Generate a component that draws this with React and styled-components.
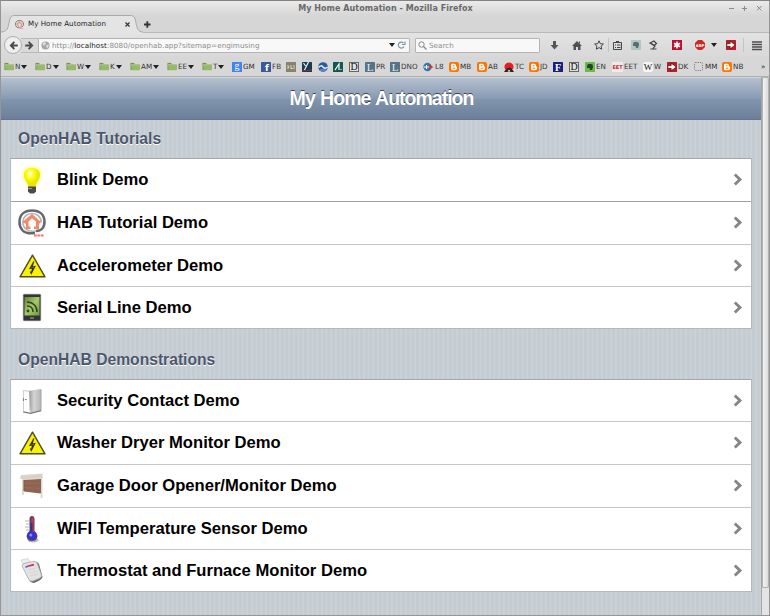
import React from 'react';
import styled, { createGlobalStyle, css } from 'styled-components';

const Global = createGlobalStyle`
  * { box-sizing: border-box; }
  body { margin: 0; background: #d6d6d6; overflow: hidden; }
  svg { display: block; flex: none; overflow: visible; }
`;

const Window = styled.div`
  width: 770px;
  height: 616px;
  display: flex;
  flex-direction: column;
  background: #d6d6d6;
  border: 1px solid #979595;
  border-top-color: #858383;
  font-family: 'DejaVu Sans', sans-serif;
  color: #3c3c3c;
`;

const Chrome = styled.div`
  height: 76px;
  flex: none;
  display: flex;
  flex-direction: column;
  background: linear-gradient(#eaeaea, #d6d6d6 15px, #d5d5d5);
  border-bottom: 1px solid #adadab;
`;

const TitleBar = styled.div`
  height: 14px;
  display: grid;
  grid-template-columns: 1fr auto 1fr;
  align-items: center;
`;

const WindowTitle = styled.div`
  grid-column: 2;
  padding: 1px 0 0 1px;
  font-size: 8px;
  line-height: 14px;
  font-weight: bold;
  color: #6a6a6a;
  letter-spacing: 0.06px;
  white-space: nowrap;
`;

const WindowButtons = styled.div`
  justify-self: end;
  margin-right: 6px;
`;

const TabStrip = styled.div`
  height: 17px;
  display: flex;
  align-items: flex-end;
`;

const Tab = styled.div`
  position: relative;
  width: 142px;
  height: 18px;
  display: flex;
  align-items: center;
  padding: 2px 0 0 14px;
`;

const TabShape = styled.svg`
  position: absolute;
  left: 0;
  top: 0;
`;

const TabLabel = styled.span`
  position: relative;
  flex: 1;
  margin-left: 4px;
  font-size: 7.1px;
  line-height: 16px;
  letter-spacing: 0.05px;
  color: #222;
  white-space: nowrap;
`;

const TabIcon = styled.span`
  position: relative;
  margin-right: ${(p) => p.$gap || 0}px;
`;

const NavBar = styled.div`
  height: 25px;
  display: flex;
  align-items: center;
  border-top: 1px solid #b9b9b9;
  background: linear-gradient(#e3e3e3, #d8d8d8);
`;

const BackButton = styled.div`
  position: relative;
  flex: none;
  width: 18px;
  height: 18px;
  margin-left: 3px;
  border-radius: 50%;
  border: 1px solid #adadad;
  background: #efefef;
  display: grid;
  place-items: center;
`;

const ForwardButton = styled.div`
  flex: none;
  width: 17px;
  height: 15px;
  margin-left: -1px;
  border: solid #b8b8b8;
  border-width: 1px 0;
  background: #dadada;
  display: grid;
  place-items: center;
`;

const Field = styled.div`
  flex: none;
  width: ${(p) => p.$width}px;
  height: 15px;
  margin-left: ${(p) => p.$left || 0}px;
  padding: 0 3px 0 2px;
  display: flex;
  align-items: center;
  gap: 2px;
  border: 1px solid #b4b4b4;
  border-radius: ${(p) => (p.$joined ? '0 1px 1px 0' : '1px')};
  background: #f8f8f8;
  font-size: 7.2px;
  line-height: 13px;
  color: #8c8c8c;
  white-space: nowrap;
`;

const Url = styled.span`
  flex: 1;
  letter-spacing: 0.04px;
  b { font-weight: normal; color: #222; }
`;

const ToolRow = styled.div`
  flex: none;
  height: 18px;
  display: flex;
  align-items: center;
`;

const Tool = styled.div`
  width: ${(p) => p.$width}px;
  margin-left: ${(p) => p.$left || 0}px;
  flex: none;
  display: flex;
  justify-content: center;
`;

const Divider = styled.div`
  width: 1px;
  height: 14px;
  background: #c3c3c3;
`;

const Bookmarks = styled.div`
  flex: 1;
  display: flex;
  align-items: center;
  padding-left: 3px;
  background: #d7d7d7;
`;

const Bookmark = styled.div`
  width: ${(p) => p.$width}px;
  flex: none;
  display: flex;
  align-items: center;
  gap: 1px;
  font-size: 7.2px;
  line-height: 10px;
  color: #333;
  white-space: nowrap;
`;

const Caret = styled.span`
  border: solid transparent;
  border-width: 4px 3px 0;
  border-top-color: #222;
`;

const Viewport = styled.div`
  flex: 1;
  min-height: 0;
  display: flex;
`;

const Page = styled.main`
  width: 760px;
  background: repeating-linear-gradient(90deg, #c4cbd1 0 2.3px, #cad2d9 2.9px 4.1px, #c4cbd1 4.667px);
  font-family: 'Liberation Sans', sans-serif;
`;

const PageHeader = styled.header`
  height: 43px;
  display: flex;
  align-items: flex-start;
  justify-content: center;
  background: linear-gradient(#b5c0cf, #889bb3 50%, #8195af 51%, #6d7f99);
  border-bottom: 1px solid #65758b;
  border-top: 1px solid #cdd5df;
  h1 {
    margin: 0;
    padding-left: 1px;
    font-size: 19.6px;
    line-height: 40px;
    letter-spacing: -1.05px;
    word-spacing: 1px;
    color: #fff;
    text-shadow: 0 -1px 0 rgba(0, 0, 0, 0.6);
    white-space: nowrap;
  }
`;

const GroupTitle = styled.h2`
  margin: 0;
  height: ${(p) => p.$height}px;
  padding: 0 0 9px 17px;
  display: flex;
  align-items: flex-end;
  font-size: 15.65px;
  line-height: 20px;
  color: #4c566c;
  text-shadow: 0 1px 0 #fff;
`;

const List = styled.ul`
  width: 742px;
  margin: 0 0 0 9px;
  padding: 0;
  display: grid;
  grid-template-rows: ${(p) => p.$rows};
  list-style: none;
  background: #fff;
  border: 1px solid #b5b9bc;
  border-top-color: #a4a8aa;
`;

const Row = styled.li`
  display: flex;
  align-items: center;
  padding: 0 9px 0 6px;
  & + & { border-top: 1px solid #c6c6c6; }
  ${(p) => p.$dark && css`&& { border-top-color: #a0a0a0; }`}
`;

const RowIcon = styled.span`
  width: 30px;
  display: flex;
  justify-content: center;
`;

const RowLabel = styled.span`
  flex: 1;
  margin-left: 10px;
  font-size: 16.62px;
  font-weight: bold;
  line-height: 20px;
  color: #000;
  white-space: nowrap;
`;

const Scrollbar = styled.div`
  flex: 1;
  display: flex;
  flex-direction: column;
  align-items: center;
  background: #cfcfcf;
  border-left: 1px solid #a5a5a5;
`;

const Thumb = styled.div`
  width: 7px;
  height: 511px;
  background: linear-gradient(90deg, #f4f4f4, #dcdcdc);
  border: 1px solid #b0b0b0;
  border-radius: 2px;
`;

const Track = styled.div`
  width: 7px;
  flex: 1;
  background: #e4e4e4;
`;

const Hab = ({ size }) => (
  <svg width={size} height={size} viewBox="0 0 28 28" fill="none">
    <path d="M17 24.300H13C6 24.300 1.500 20 1.500 13C1.500 6 6 1.500 14 1.500C22 1.500 26.500 6 26.500 13C26.500 19 22.500 22 18 22" stroke="#66696b" strokeWidth="2.600" />
    <path d="M18 22C10 23.500 4.800 19 4.800 13C4.800 8 9 4.500 14 4.500C19 4.500 23.300 8 23.300 13.500" stroke="#b3b3b3" strokeWidth="1.600" />
    <path d="M4.500 13L14 5L23 13L21 15V20H16V17.500H18V12.500L14 9.300L10.500 12.500V17.500H12.500V20H8V15Z" fill="#f4896a" />
    <path d="M16 26.500h10" stroke="#f47a5e" strokeWidth="2" strokeDasharray="2.800 .6" />
  </svg>
);

const Bulb = () => (
  <svg width="20" height="28" viewBox="0 0 20 28">
    <defs>
      <radialGradient id="bulb" cx=".4" cy=".3"><stop offset="0" stopColor="#fff" /><stop offset=".25" stopColor="#ffff78" /><stop offset=".6" stopColor="#fafa00" /><stop offset="1" stopColor="#e6e600" /></radialGradient>
      <filter id="glow" x="-30%" y="-30%" width="160%" height="160%"><feGaussianBlur stdDeviation="1" /></filter>
    </defs>
    <path d="M10 1C4 1 1 4.500 1 9C1 14 5 15 6 21H14C15 15 19 14 19 9C19 4.500 16 1 10 1Z" fill="#ffff50" filter="url(#glow)" />
    <path d="M10 2C5 2 2 5 2 9C2 14 6 16 6.500 21H13.500C14 16 18 14 18 9C18 5 15 2 10 2Z" fill="url(#bulb)" />
    <path d="M6 20.500h8v5l-2 2H8l-2-2z" fill="#4a4a50" /><path d="M6 22.500h4" stroke="#999" />
  </svg>
);

const Warning = () => (
  <svg width="27" height="24" viewBox="0 0 27 24">
    <path d="M13.500 1.200L26 22.800H1Z" fill="#f8f200" stroke="#4d4b28" strokeWidth="1.400" strokeLinejoin="round" />
    <path d="M15 7.500L11 14.300L13.700 13.800L12.300 19.500M14.500 8L13 13L15.800 12.500L12.300 19.500L11.300 17.500" fill="none" stroke="#35330f" strokeWidth="1.200" />
  </svg>
);

const Phone = () => (
  <svg width="18" height="27" viewBox="0 0 18 27">
    <defs><linearGradient id="screen" x1="0" y1="0" x2="1" y2="1"><stop stopColor="#5f7f3a" /><stop offset=".5" stopColor="#a7ca68" /><stop offset="1" stopColor="#6b9a3c" /></linearGradient></defs>
    <rect x=".3" y=".3" width="17.400" height="26.400" rx="1" fill="#32343a" stroke="#777" strokeWidth=".6" />
    <rect x="1.500" y="3" width="15" height="18.500" fill="url(#screen)" />
    <path d="M4 8c6 0 10 4 10 10M4 12c4 0 6 2 6 6" stroke="#33421f" strokeWidth="1.500" fill="none" />
    <circle cx="5" cy="17" r="1.400" fill="#33421f" /><path d="M7 24h4" stroke="#aaa" />
  </svg>
);

const Door = () => (
  <svg width="21" height="28" viewBox="0 0 22 28">
    <defs><linearGradient id="door"><stop stopColor="#9a9a9a" /><stop offset=".4" stopColor="#d4d4d4" /><stop offset="1" stopColor="#b4b4b4" /></linearGradient></defs>
    <path d="M1 3L20 2V24H1Z" fill="#eee" />
    <path d="M1.500 26V3L8 4V24" fill="#fdfdfd" stroke="#ccc" />
    <path d="M7.500 3.500L20 1.500V24L9 26.500Z" fill="url(#door)" />
    <path d="M1.500 25.500L9 27L20 24" fill="none" stroke="#777" strokeWidth="1.300" />
    <path d="M20 2V24" stroke="#9c9c9c" strokeWidth=".8" />
    <path d="M1.500 11v3M3 12.500h2" stroke="#777" />
  </svg>
);

const Garage = () => (
  <svg width="24" height="26" viewBox="0 0 24 26">
    <path d="M1 2L22.500 .5V25H20.500V6L4 7V22H2V6L.5 6Z" fill="#dfd9cd" />
    <path d="M.5 3L22.500 1.500V5L.5 6Z" fill="#d8d2c6" />
    <path d="M4 7L20.500 6V20.500L4 18.500Z" fill="#8f6252" />
    <path d="M4 10.500L20.500 10M4 14.500L20.500 15.500" stroke="#9a6e5e" strokeWidth=".8" /><path d="M20.500 6V20M3.800 7V18" stroke="#6f4d42" strokeWidth=".7" />
  </svg>
);

const Thermometer = () => (
  <svg width="16" height="28" viewBox="0 0 16 28">
    <ellipse cx="9" cy="25" rx="5.500" ry="2.500" fill="#888" opacity=".6" />
    <path d="M5.500 4Q5.500 1 8 1Q10.500 1 10.500 4V16Q13.500 18 13.500 21Q13 26 8 26Q3 26 2.500 21Q2.500 18 5.500 16Z" fill="#5b4358" />
    <path d="M8.500 2.500V20" stroke="#c6364d" strokeWidth="2.200" /><path d="M7.500 8V20" stroke="#3432a0" strokeWidth="2" />
    <circle cx="7.800" cy="20.700" r="4" fill="#3030e8" /><circle cx="6.800" cy="20" r="1.500" fill="#9292ff" />
    <path d="M1 6h4M2 9h3M1 12h4M2 15h3" stroke="#b5b5b5" />
  </svg>
);

const Thermostat = () => (
  <svg width="24" height="26" viewBox="0 0 24 26">
    <path d="M1 2L8 .5L10 4L3 6Z" fill="#eee" stroke="#c4c4c4" strokeWidth=".6" />
    <path d="M4 10L16 4Q18 4 19 6L22.500 19Q22 22 14 25Q11 25.500 9 22Z" fill="#6f6f6f" />
    <path d="M2 8Q2 6 4 5.500L14 3.200Q16.500 3.500 17.500 6L21.500 17Q22 19 19 20.500L13 23Q10 24 8.500 21Z" fill="#e2e2e2" stroke="#a5a5a5" strokeWidth=".7" />
    <path d="M5.500 9.300L9 7.800" stroke="#6a5bd0" strokeWidth="1.500" /><path d="M9 7.800L14 6.700" stroke="#d83058" strokeWidth="1.800" />
    <path d="M8 12L16 10M9 15L17 13M10 18L18 16" stroke="#d2d2d2" strokeWidth=".8" />
  </svg>
);

const Chevron = () => (
  <svg width="9" height="14" viewBox="0 0 9 14" fill="none"><path d="M1.800 1.500L7 6.500L1.800 11.500" stroke="#858585" strokeWidth="2.900" /></svg>
);

const Arrow = ({ flip }) => (
  <svg width="9" height="9" viewBox="0 0 9 9" transform={flip ? 'scale(-1 1)' : undefined}><path d="M.5 4.500L4.700 .2L6 1.500L4.400 3.400H8.800V5.600H4.400L6 7.500L4.700 8.800Z" fill="#4c4c4c" /></svg>
);

const Globe = () => (
  <svg width="9" height="9" viewBox="0 0 9 9"><circle cx="4.500" cy="4.500" r="4.100" fill="#a6a6a6" /><path d="M1.500 2L4 1L5 3L2.500 5ZM5.500 4L8 3.500L7 7L5 6Z" fill="#ddd" /></svg>
);

const Folder = () => (
  <svg width="10" height="9" viewBox="0 0 10 9"><path d="M.5 1h3.500l1 1.300h4.500V8H.5Z" fill="#6f8f4a" /><path d="M1 3h8.700v5.200H1.500Z" fill="#96bb64" /><path d="M0 .6h4M1 2.700h8.500" stroke="#c4cfb8" strokeWidth=".8" /></svg>
);

const SmallText = styled.text`
  font-family: ${(p) => p.$font || "'DejaVu Sans', sans-serif"};
  font-size: ${(p) => p.$size || 8}px;
  font-weight: ${(p) => (p.$light ? 'normal' : 'bold')};
  text-anchor: middle;
`;

const Glyph = ({ kind }) => {
  const tile = (bg, body) => (
    <svg width="10" height="10" viewBox="0 0 10 10"><rect width="10" height="10" rx=".5" fill={bg} />{body}</svg>
  );
  const serif = "'Liberation Serif', serif";
  switch (kind) {
    case 'folder': return <Folder />;
    case 'google': return tile('#4384f0', <SmallText $font={serif} $light $size={10} x="5" y="7.200" fill="#fff">g</SmallText>);
    case 'facebook': return tile('#3b5998', <SmallText x="6" y="9" $size={9} fill="#fff">f</SmallText>);
    case 'grey': return tile('#85836f', <path d="M2 3v4M5 3v4M8 3v4M2 5h1.500M5 6.500h2" stroke="#e9e7dc" strokeWidth=".8" />);
    case 'stripe': return tile('#183a52', <><path d="M1.500 1l2 3M6.500 0L2.500 8" stroke="#eee" strokeWidth="1.200" /><path d="M0 9L10 8" stroke="#b33" strokeWidth=".7" /></>);
    case 'round': return <svg width="10" height="10" viewBox="0 0 10 10"><circle cx="5" cy="5" r="4.800" fill="#2758a5" /><path d="M.5 5.500Q3 2.500 5 5T9.500 5" stroke="#e8eef8" strokeWidth="1.500" fill="none" /><path d="M2 8h6" stroke="#8fb0dd" /></svg>;
    case 'green': return tile('#13584a', <path d="M2 8L6 2V8M7.500 7.500h1" stroke="#fff" strokeWidth="1.200" fill="none" />);
    case 'D': return <svg width="10" height="10" viewBox="0 0 10 10"><rect x=".5" y=".5" width="9" height="9" fill="#e2e2e2" stroke="#666" /><SmallText $light $font={serif} $size={10} x="5" y="8.300" fill="#111">D</SmallText></svg>;
    case 'L': return tile('#567388', <SmallText $light $font={serif} $size={11} x="5" y="8.700" fill="#e4ecf1">L</SmallText>);
    case 'L8': return <svg width="11" height="10" viewBox="0 0 11 10"><circle cx="4.500" cy="5" r="4.200" fill="#3178b8" /><path d="M1 5h5M3.500 3v4" stroke="#fff" /><path d="M6 2.500L10.500 5L6 7.500Z" fill="#dd3428" /></svg>;
    case 'blogger': return <svg width="10" height="10" viewBox="0 0 10 10"><rect width="10" height="10" rx="2" fill="#ff7300" /><path d="M3 1.800H5.300Q7 1.800 7 4.200Q8.200 4.400 8.200 5.500Q8.200 8.200 6 8.200H3.200Q2 8.200 2 7V3Q2 1.800 3 1.800Z" fill="#fff" /><path d="M3.700 3.800h1.800M3.700 6.200h2.600" stroke="#ff7300" strokeWidth="1" /></svg>;
    case 'tc': return <svg width="10" height="10" viewBox="0 0 10 10"><path d="M1 7A4.500 4.500 0 1 1 9 7Z" fill="#ee1c1c" /><path d="M0 10L2 7L4 6L6 5.500L8 7L10 10Z" fill="#262626" /><path d="M3.500 9.500L5 7.500L6.500 9.500Z" fill="#fff" /></svg>;
    case 'F': return tile('#18207a', <SmallText $font={serif} $size={10} x="5" y="8.500" fill="#fff">F</SmallText>);
    case 'evernote': return tile('#6cba4a', <path d="M3 2h3q2 0 2 3L7 8H5L4.500 6H2V4Z" fill="#24452a" />);
    case 'eet': return <svg width="11" height="10" viewBox="0 0 11 10"><rect width="11" height="10" fill="#f2eaea" /><SmallText $size={5} x="5.500" y="7" fill="#c5262e">EET</SmallText></svg>;
    case 'W': return <svg width="10" height="10" viewBox="0 0 10 10"><rect width="10" height="10" rx="2" fill="#f5f5f5" /><SmallText $light $font={serif} $size={9} x="5" y="8" fill="#111">W</SmallText></svg>;
    case 'dk': return tile('#b81d28', <path d="M.8 3.700h3.400V1.200L9.200 5L4.200 8.800V6.300H.8Z" fill="#fff" stroke="#300" strokeWidth=".6" />);
    case 'dashed': return <svg width="10" height="10" viewBox="0 0 10 10"><rect x=".5" y=".5" width="8" height="8" rx="1" fill="none" stroke="#666" strokeDasharray="1.200 1" strokeWidth=".8" /></svg>;
    default: return null;
  }
};

const bookmarks = [
  ['folder', 'N', 31, 1], ['folder', 'D', 31, 1], ['folder', 'W', 33, 1], ['folder', 'K', 31, 1],
  ['folder', 'AM', 37, 1], ['folder', 'EE', 35, 1], ['folder', 'T', 30, 1], ['google', 'GM', 29],
  ['facebook', 'FB', 25], ['grey', '', 16], ['stripe', '', 16], ['round', '', 15], ['green', '', 16],
  ['D', '', 16], ['L', 'PR', 25], ['L', 'DNO', 33], ['L8', 'L8', 26], ['blogger', 'MB', 28],
  ['blogger', 'AB', 27], ['tc', 'TC', 25], ['blogger', 'JD', 24], ['F', '', 16], ['D', '', 16],
  ['evernote', 'EN', 27], ['eet', 'EET', 31], ['W', 'W', 24], ['dk', 'DK', 27], ['dashed', 'MM', 28],
  ['blogger', 'NB', 39], ['', '»', 6],
];

const tutorials = [
  [Bulb, 'Blink Demo'], [() => <Hab size={28} />, 'HAB Tutorial Demo'],
  [Warning, 'Accelerometer Demo'], [Phone, 'Serial Line Demo'],
];

const demos = [
  [Door, 'Security Contact Demo'], [Warning, 'Washer Dryer Monitor Demo'],
  [Garage, 'Garage Door Opener/Monitor Demo'], [Thermometer, 'WIFI Temperature Sensor Demo'],
  [Thermostat, 'Thermostat and Furnace Monitor Demo'],
];

const Menu = ({ items, rows, darkRow }) => (
  <List $rows={rows}>
    {items.map(([Icon, label], i) => (
      <Row key={label} $dark={i === darkRow}>
        <RowIcon><Icon /></RowIcon>
        <RowLabel>{label}</RowLabel>
        <Chevron />
      </Row>
    ))}
  </List>
);

const Toolbar = () => (
  <ToolRow>
    <Tool $width={28}><svg width="9" height="9" viewBox="0 0 9 9"><path d="M3 0h3v4h2.500L4.500 8.500L.5 4H3Z" fill="#555" /></svg></Tool>
    <Tool $width={18}><svg width="10" height="9" viewBox="0 0 10 9"><path d="M0 5L5 0L10 5H8.500V9H6V6H4V9H1.500V5Z" fill="#505050" /><path d="M7.500 .5v2" stroke="#505050" /></svg></Tool>
    <Tool $width={19} $left={3}><svg width="10" height="10" viewBox="0 0 10 10"><path d="M5 .8L6.300 3.700L9.400 4L7.100 6.100L7.700 9.200L5 7.600L2.300 9.200L2.900 6.100L.6 4L3.700 3.700Z" fill="none" stroke="#444" /></svg></Tool>
    <Divider />
    <Tool $width={17}><svg width="9" height="9" viewBox="0 0 9 9"><path d="M.5 1.500h8v7h-8ZM3 .5h3M2 4h1M4 4h3.500M2 6.500h1M4 6.500h3.500" fill="none" stroke="#474747" /></svg></Tool>
    <Tool $width={19}><svg width="10" height="10" viewBox="0 0 10 10"><rect width="10" height="10" fill="#b4c6c4" /><path d="M3 2h3q2 0 2 3L7 8H5L4.500 6H2V4Z" fill="#53716c" /></svg></Tool>
    <Tool $width={17}><svg width="9" height="10" viewBox="0 0 9 10"><path d="M1.500 9h6M4 8.500L6 6L2.500 3.500M1 3L5 1L7.500 3.500L5 5.500Z" fill="none" stroke="#444" strokeWidth="1.200" /></svg></Tool>
    <Tool $width={29}><svg width="10" height="10" viewBox="0 0 10 10"><rect width="10" height="10" fill="#b80f2e" /><path d="M5 1.500v7M2 3.200l6 3.600M8 3.200L2 6.800" stroke="#fff" strokeWidth="1.600" /></svg></Tool>
    <Tool $width={17}><svg width="10" height="10" viewBox="0 0 10 10"><path d="M3 0h4l3 3v4L7 10H3L0 7V3Z" fill="#cb2a20" /><SmallText $size={3.8} x="5" y="6.500" fill="#fff">ABP</SmallText></svg></Tool>
    <Tool $width={11}><Caret /></Tool>
    <Tool $width={24}><Glyph kind="dk" /></Tool>
    <Divider />
    <Tool $width={25}><svg width="10" height="9" viewBox="0 0 10 9"><path d="M0 1h10M0 3.500h10M0 6h10M0 8.500h10" stroke="#505050" strokeWidth="1.500" /></svg></Tool>
  </ToolRow>
);

export default function App() {
  return (
    <Window>
      <Global />
      <Chrome>
        <TitleBar>
          <WindowTitle>My Home Automation - Mozilla Firefox</WindowTitle>
          <WindowButtons>
            <svg width="36" height="8" viewBox="0 0 36 8" fill="none" stroke="#8b8b8b"><path d="M2 3.500h5M15 3.500h5M17.500 1v5M30 1l4.500 4.500M34.500 1L30 5.500" /></svg>
          </WindowButtons>
        </TitleBar>
        <TabStrip>
          <Tab>
            <TabShape width="142" height="19" viewBox="0 0 142 19"><path d="M0 18C6 18 7 14 8 9C9 3 10 1.500 14 1.500H129C133 1.500 134 3 135 9C136 14 137 18 142 18V19H0Z" fill="#e4e4e4" /><path d="M0 18C6 18 7 14 8 9C9 3 10 1.500 14 1.500H129C133 1.500 134 3 135 9C136 14 137 18 142 18" fill="none" stroke="#a9a9a9" /></TabShape>
            <TabIcon><Hab size={9} /></TabIcon>
            <TabLabel>My Home Automation</TabLabel>
            <TabIcon $gap={13}><svg width="5" height="5" viewBox="0 0 5 5"><path d="M.5 .5l4 4M4.500 .5l-4 4" stroke="#333" strokeWidth="1.200" /></svg></TabIcon>
          </Tab>
          <Tool $width={8}><svg width="7" height="13" viewBox="0 0 7 13"><path d="M0 5.500h6.500M3.300 2.200v6.500" stroke="#333" strokeWidth="1.800" /></svg></Tool>
        </TabStrip>
        <NavBar>
          <BackButton><Arrow /></BackButton>
          <ForwardButton><Arrow flip /></ForwardButton>
          <Field $width={372} $joined>
            <Globe />
            <Url>http://<b>localhost</b>:8080/openhab.app?sitemap=engimusing</Url>
            <Caret />
            <svg width="9" height="8" viewBox="0 0 9 8"><path d="M7 5.500A3 3 0 1 1 6.500 2M8 .5V3.500H5" fill="none" stroke="#8194a6" strokeWidth="1.200" /></svg>
          </Field>
          <Field $width={125} $left={5}>
            <svg width="9" height="9" viewBox="0 0 9 9"><circle cx="3.500" cy="3.500" r="2.700" fill="none" stroke="#888" /><path d="M5.500 5.500L8.500 8.500" stroke="#888" strokeWidth="1.300" /></svg>
            <Url>Search</Url>
          </Field>
          <Toolbar />
        </NavBar>
        <Bookmarks>
          {bookmarks.map(([kind, label, width, menu], i) => (
            <Bookmark key={i} $width={width}>
              <Glyph kind={kind} />
              {label}
              {menu && <Caret />}
            </Bookmark>
          ))}
        </Bookmarks>
      </Chrome>
      <Viewport>
        <Page>
          <PageHeader><h1>My Home Automation</h1></PageHeader>
          <GroupTitle $height={38}>OpenHAB Tutorials</GroupTitle>
          <Menu items={tutorials} rows="42px 43px 42px 42px" darkRow={1} />
          <GroupTitle $height={50}>OpenHAB Demonstrations</GroupTitle>
          <Menu items={demos} rows="41px 43px 43px 42px 42px" />
        </Page>
        <Scrollbar><Thumb /><Track /></Scrollbar>
      </Viewport>
    </Window>
  );
}
